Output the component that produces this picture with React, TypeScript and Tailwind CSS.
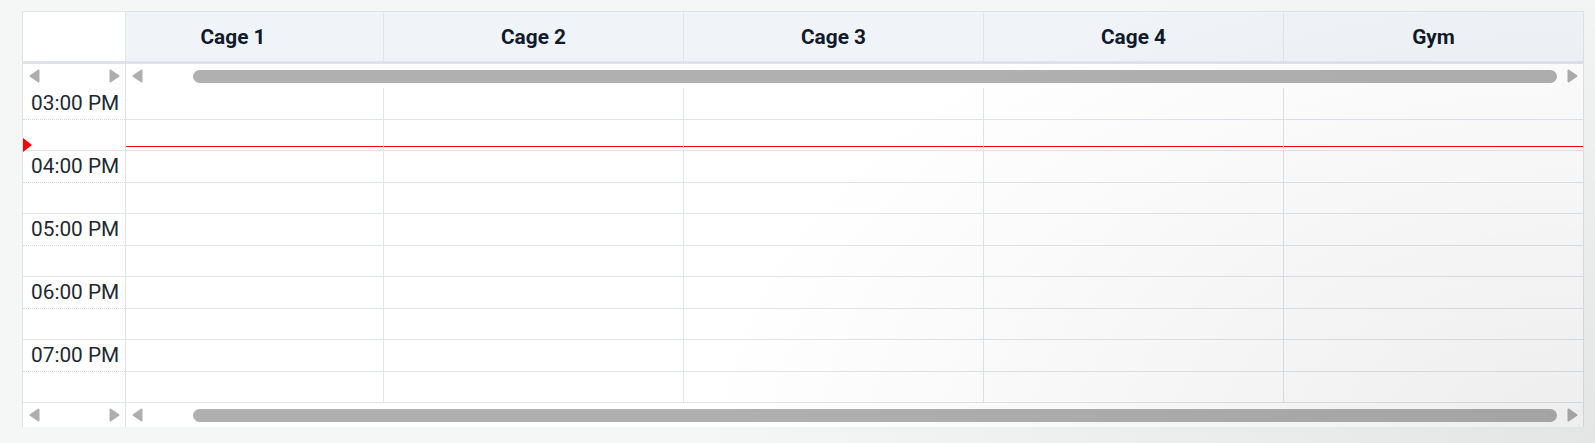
import React from "react";

const columns = [
  { name: "Cage 1", w: "w-[258px]", pad: "pr-[43px]" },
  { name: "Cage 2", w: "w-[300px]", pad: "" },
  { name: "Cage 3", w: "w-[300px]", pad: "" },
  { name: "Cage 4", w: "w-[300px]", pad: "" },
  { name: "Gym", w: "w-[299px]", pad: "" },
];

const hours = ["03:00 PM", "04:00 PM", "05:00 PM", "06:00 PM", "07:00 PM"];

function Arrow({ dir }: { dir: "left" | "right" }) {
  return (
    <svg width="11" height="14" viewBox="0 0 11 14" className="shrink-0">
      {dir === "left" ? (
        <path d="M9.5 1.5 L1.5 7 L9.5 12.5 Z" fill="#aeaeae" stroke="#aeaeae" strokeWidth="2" strokeLinejoin="round" />
      ) : (
        <path d="M1.5 1.5 L9.5 7 L1.5 12.5 Z" fill="#aeaeae" stroke="#aeaeae" strokeWidth="2" strokeLinejoin="round" />
      )}
    </svg>
  );
}

function ScrollRow() {
  return (
    <div className="flex h-[24px]">
      <div className="w-[103px] shrink-0 border-r border-[#e1e4e8] flex items-center justify-between pl-[6px] pr-[5px]">
        <Arrow dir="left" />
        <Arrow dir="right" />
      </div>
      <div className="flex-1 flex items-center pl-[6px] pr-[5px]">
        <Arrow dir="left" />
        <div className="ml-[50px] flex-1 h-[13px] rounded-full bg-[#b1b0b0]" />
        <div className="w-[10px]" />
        <Arrow dir="right" />
      </div>
    </div>
  );
}

export default function App() {
  return (
    <div className="relative w-full h-[443px] bg-[#f5f7f7] pt-[11px] pl-[22px] pr-[11px] overflow-hidden font-['Roboto',sans-serif]">
      <div className="w-[1562px] bg-white border-x border-t border-[#dfe3e8] flex flex-col">
        {/* header */}
        <div className="flex h-[49px]">
          <div className="w-[103px] shrink-0 border-r border-[#e1e4e8] bg-white" />
          {columns.map((c, i) => (
            <div
              key={c.name}
              className={`${c.w} ${c.pad} shrink-0 bg-[#f0f4f9] flex items-center justify-center pt-[2px] text-[20.8px] font-bold text-[#111a2c] ${i < columns.length - 1 ? "border-r border-[#e1e4e8]" : ""}`}
            >
              {c.name}
            </div>
          ))}
        </div>
        <div className="h-[3px] bg-[#dfe3e9]" />
        <ScrollRow />

        {/* body */}
        <div className="relative flex">
          <div className="w-[103px] shrink-0 border-r border-[#e1e4e8] flex flex-col">
            {hours.map((h) => (
              <React.Fragment key={h}>
                <div className="h-[32px] border-b border-dotted border-[#d6d9dd] flex items-center pl-[8px] text-[20.8px] text-[#222831] whitespace-nowrap">
                  {h}
                </div>
                <div className="h-[31px] border-b border-[#e1e4e8]" />
              </React.Fragment>
            ))}
          </div>
          {columns.map((c, i) => (
            <div
              key={c.name}
              className={`relative ${c.w} shrink-0 flex flex-col ${i < columns.length - 1 ? "border-r border-[#e1e4e8]" : ""}`}
            >
              {hours.map((h) => (
                <React.Fragment key={h}>
                  <div className="h-[32px] border-b border-[#e1e4e8]" />
                  <div className="h-[31px] border-b border-[#e1e4e8]" />
                </React.Fragment>
              ))}
              <div className="absolute left-0 right-0 top-[58px] h-px bg-[#ff0000]" />
            </div>
          ))}
          {/* current time marker */}
          <div className="absolute left-0 top-[50px] w-0 h-0 border-y-[7px] border-y-transparent border-l-[9px] border-l-[#ff0000]" />
        </div>

        <ScrollRow />
      </div>
      <div className="pointer-events-none absolute inset-0 bg-[radial-gradient(ellipse_900px_520px_at_100%_100%,rgba(0,0,0,0.07),transparent)]" />
    </div>
  );
}
